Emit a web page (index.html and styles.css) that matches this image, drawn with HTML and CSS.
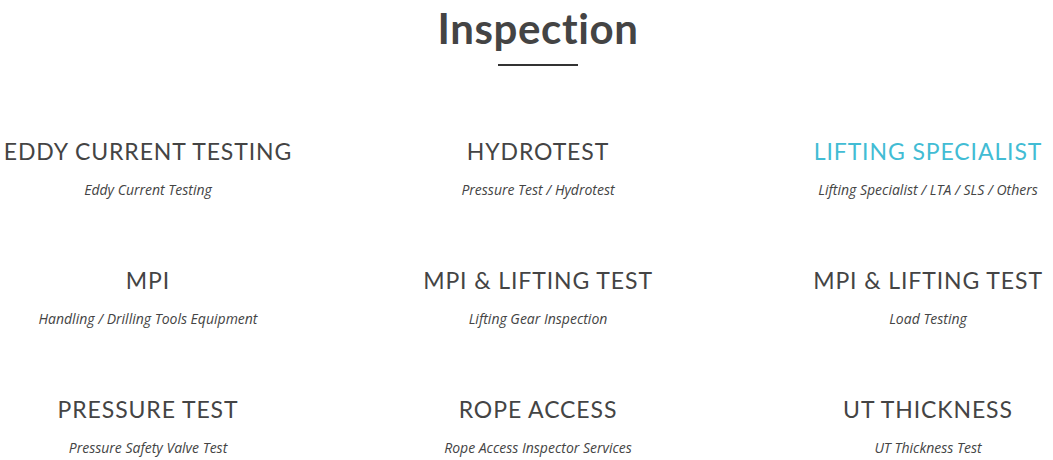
FILE: index.html
```html
<!DOCTYPE html>
<html lang="en">
<head>
<meta charset="utf-8">
<title>Inspection</title>
<link rel="stylesheet" href="styles.css">
</head>
<body>
<section class="inspection">
  <h1 class="section-title">Inspection</h1>
  <div class="title-rule"></div>
  <div class="services">
    <div class="service"><h3 class="service-name">EDDY CURRENT TESTING</h3><p class="service-desc">Eddy Current Testing</p></div>
    <div class="service"><h3 class="service-name">HYDROTEST</h3><p class="service-desc">Pressure Test / Hydrotest</p></div>
    <div class="service"><h3 class="service-name active">LIFTING SPECIALIST</h3><p class="service-desc">Lifting Specialist / LTA / SLS / Others</p></div>
    <div class="service"><h3 class="service-name">MPI</h3><p class="service-desc">Handling / Drilling Tools Equipment</p></div>
    <div class="service"><h3 class="service-name">MPI &amp; LIFTING TEST</h3><p class="service-desc">Lifting Gear Inspection</p></div>
    <div class="service"><h3 class="service-name">MPI &amp; LIFTING TEST</h3><p class="service-desc">Load Testing</p></div>
    <div class="service"><h3 class="service-name">PRESSURE TEST</h3><p class="service-desc">Pressure Safety Valve Test</p></div>
    <div class="service"><h3 class="service-name">ROPE ACCESS</h3><p class="service-desc">Rope Access Inspector Services</p></div>
    <div class="service"><h3 class="service-name">UT THICKNESS</h3><p class="service-desc">UT Thickness Test</p></div>
  </div>
</section>
</body>
</html>
```
FILE: styles.css
```css
html, body {
  margin: 0;
  padding: 0;
  background: #fff;
}
body {
  font-family: "Open Sans", sans-serif;
  color: #444;
  overflow: hidden;
}
.inspection {
  padding-left: 23px;
  text-align: center;
}
.section-title {
  margin: 0;
  padding-top: 4px;
  font-family: "Lato", "Open Sans", sans-serif;
  font-weight: 700;
  font-size: 42px;
  line-height: 48px;
  letter-spacing: 0.6px;
  color: #444;
}
.title-rule {
  width: 80px;
  height: 2px;
  background: #333;
  margin: 12px auto 0;
}
.services {
  display: grid;
  grid-template-columns: repeat(3, 250px);
  column-gap: 140px;
  row-gap: 65px;
  margin-top: 71px;
}
.service {
  display: flex;
  flex-direction: column;
  align-items: center;
}
.service-name {
  margin: 0;
  white-space: nowrap;
  font-family: "Lato", "Open Sans", sans-serif;
  font-weight: 400;
  font-size: 23px;
  line-height: 28px;
  letter-spacing: 0.9px;
  color: #444;
}
.service-name.active {
  color: #42bcd4;
}
.service-desc {
  margin: 14px 0 0;
  white-space: nowrap;
  font-style: italic;
  font-size: 14px;
  line-height: 22px;
  color: #444;
}
```
